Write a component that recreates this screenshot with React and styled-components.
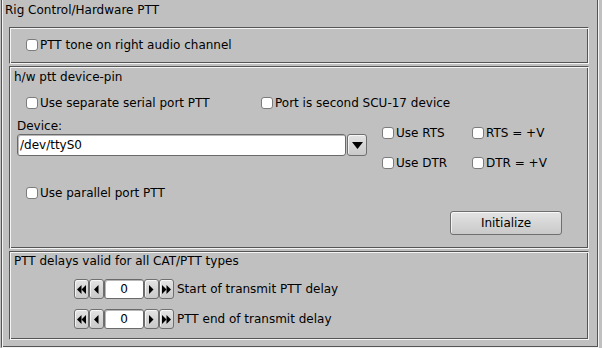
import React from 'react';
import styled, { createGlobalStyle, css } from 'styled-components';

const DARK = '#555555';
const LIGHT = '#f4f4f4';
const BG = '#c0c0c0';

const GlobalStyle = createGlobalStyle`
  html, body { margin: 0; padding: 0; background: ${BG}; }
  body {
    font-family: "DejaVu Sans", "Liberation Sans", sans-serif;
    font-size: 12px;
    line-height: 14px;
    color: #000;
  }
  #root { width: 602px; height: 348px; overflow: hidden; }
`;

const engraved = css`
  box-sizing: border-box;
  border: 1px solid;
  border-color: ${DARK} ${LIGHT} ${LIGHT} ${DARK};
  box-shadow: inset 1px 1px 0 ${LIGHT}, inset -1px -1px 0 ${DARK};
`;

const raised = css`
  box-sizing: border-box;
  border: 1px solid #6f6f6f;
  border-radius: 3px;
  background: linear-gradient(to bottom, #e4e4e4 0%, #d6d6d6 50%, #c9c9c9 100%);
  box-shadow: inset 1px 1px 0 rgba(255, 255, 255, 0.7);
  display: flex;
  align-items: center;
  justify-content: center;
`;

const Screen = styled.div`
  width: 602px;
  height: 348px;
  overflow: hidden;
  background: ${BG};
  padding-left: 1px;
  box-sizing: border-box;
`;

const Frame = styled.div`
  ${engraved}
  width: 598px;
  height: 350px;
  margin-top: -2px;
  padding: 4px 0 0 7px;
  display: flex;
  flex-direction: column;
`;

const Title = styled.div`
  margin-left: -4px;
  height: 14px;
  white-space: nowrap;
`;

const Group = styled.div`
  ${engraved}
  width: 580px;
  height: ${(p) => p.$h}px;
  margin-top: ${(p) => p.$mt}px;
  display: flex;
  flex-direction: column;
  flex: none;
`;

const GroupLabel = styled.div`
  margin: ${(p) => p.$mt}px 0 0 4px;
  height: 14px;
  white-space: nowrap;
`;

const Row = styled.div`
  display: flex;
  margin: ${(p) => p.$mt || 0}px 0 0 ${(p) => p.$ml || 0}px;
`;

const CheckItem = styled.label`
  display: flex;
  align-items: flex-start;
  height: 14px;
  white-space: nowrap;
  width: ${(p) => (p.$w ? `${p.$w}px` : 'auto')};
  margin: ${(p) => p.$mt || 0}px 0 0 ${(p) => p.$ml || 0}px;
`;

const Box = styled.span`
  box-sizing: border-box;
  width: 12px;
  height: 12px;
  margin: 1px 2px 0 0;
  border: 1px solid #7c7c7c;
  border-radius: 3px;
  background: #fff;
  flex: none;
`;

const Body = styled.div`
  display: flex;
`;

const LeftCol = styled.div`
  display: flex;
  flex-direction: column;
  margin-left: 7px;
  width: 350px;
`;

const FieldLabel = styled.div`
  margin-top: 9px;
  height: 14px;
`;

const Combo = styled.div`
  display: flex;
  margin-top: 1px;
  height: 22px;
`;

const TextInput = styled.div`
  box-sizing: border-box;
  width: 329px;
  height: 22px;
  border: 1px solid #6a6a6a;
  border-radius: 3px;
  background: #fff;
  box-shadow: inset 1px 1px 0 #b8b8b8;
  padding-left: 2px;
  display: flex;
  align-items: center;
  white-space: nowrap;
`;

const DropButton = styled.div`
  ${raised}
  width: 20px;
  height: 22px;
  margin-left: 1px;
`;

const RightCol = styled.div`
  display: flex;
  flex-direction: column;
  margin-left: 15px;
`;

const CheckGrid = styled.div`
  display: grid;
  grid-template-columns: 90px auto;
  row-gap: 16px;
  margin-top: 16px;
`;

const PushButton = styled.div`
  ${raised}
  width: 112px;
  height: 24px;
  margin: 41px 0 0 68px;
`;

const CounterRow = styled.div`
  display: flex;
  align-items: center;
  height: 20px;
  margin: ${(p) => p.$mt}px 0 0 64px;
  white-space: nowrap;
`;

const Counter = styled.div`
  display: flex;
  height: 20px;
  margin-right: 3px;
`;

const CounterButton = styled.div`
  ${raised}
  width: 15px;
  height: 20px;
`;

const CounterValue = styled.div`
  box-sizing: border-box;
  width: 40px;
  height: 20px;
  border: 1px solid #6a6a6a;
  border-radius: 3px;
  background: #fff;
  box-shadow: inset 1px 1px 0 #b8b8b8;
  display: flex;
  align-items: center;
  justify-content: center;
`;

const Check = ({ children, ...rest }) => (
  <CheckItem {...rest}>
    <Box />
    <span>{children}</span>
  </CheckItem>
);

const Arrow = ({ dir, double }) => {
  const tri = (x) =>
    dir === 'left'
      ? `M${x + 4.5} 0 L${x} 4.5 L${x + 4.5} 9 Z`
      : `M${x} 0 L${x + 4.5} 4.5 L${x} 9 Z`;
  const w = double ? 9 : 5;
  return (
    <svg width={w} height="9" viewBox={`0 0 ${w} 9`}>
      <path d={tri(0)} fill="#000" />
      {double && <path d={tri(4.5)} fill="#000" />}
    </svg>
  );
};

const DelayCounter = ({ value, label, mt }) => (
  <CounterRow $mt={mt}>
    <Counter>
      <CounterButton><Arrow dir="left" double /></CounterButton>
      <CounterButton><Arrow dir="left" /></CounterButton>
      <CounterValue>{value}</CounterValue>
      <CounterButton><Arrow dir="right" /></CounterButton>
      <CounterButton><Arrow dir="right" double /></CounterButton>
    </Counter>
    <span>{label}</span>
  </CounterRow>
);

export default function App() {
  return (
    <Screen>
      <GlobalStyle />
      <Frame>
        <Title>Rig Control/Hardware PTT</Title>

        <Group $h={37} $mt={10}>
          <Check $mt={10} $ml={16}>PTT tone on right audio channel</Check>
        </Group>

        <Group $h={183} $mt={2}>
          <GroupLabel $mt={3}>h/w ptt device-pin</GroupLabel>
          <Row $mt={12} $ml={16}>
            <Check $w={235}>Use separate serial port PTT</Check>
            <Check>Port is second SCU-17 device</Check>
          </Row>
          <Body>
            <LeftCol>
              <FieldLabel>Device:</FieldLabel>
              <Combo>
                <TextInput>/dev/ttyS0</TextInput>
                <DropButton>
                  <svg width="11" height="7" viewBox="0 0 11 7">
                    <path d="M0 0 L11 0 L5.5 7 Z" fill="#000" />
                  </svg>
                </DropButton>
              </Combo>
              <Check $mt={30} $ml={9}>Use parallel port PTT</Check>
            </LeftCol>
            <RightCol>
              <CheckGrid>
                <Check>Use RTS</Check>
                <Check>RTS = +V</Check>
                <Check>Use DTR</Check>
                <Check>DTR = +V</Check>
              </CheckGrid>
              <PushButton>Initialize</PushButton>
            </RightCol>
          </Body>
        </Group>

        <Group $h={89} $mt={2}>
          <GroupLabel $mt={2}>PTT delays valid for all CAT/PTT types</GroupLabel>
          <DelayCounter mt={11} value="0" label="Start of transmit PTT delay" />
          <DelayCounter mt={10} value="0" label="PTT end of transmit delay" />
        </Group>
      </Frame>
    </Screen>
  );
}
